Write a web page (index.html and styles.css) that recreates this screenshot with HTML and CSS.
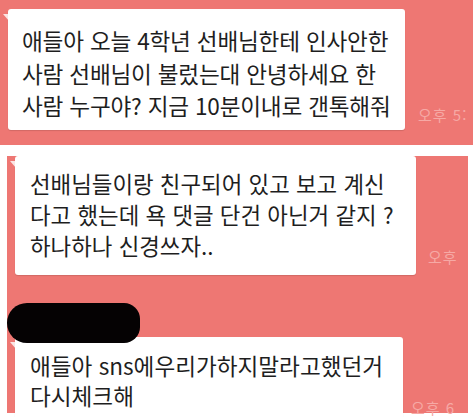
FILE: index.html
```html
<!DOCTYPE html>
<html lang="ko">
<head>
    <meta charset="UTF-8">
    <meta name="viewport" content="width=device-width, initial-scale=1.0">
    <title>카톡 캡처</title>
    <link rel="stylesheet" href="styles.css">
</head>
<body>
    <!-- 첫번째 캡처 -->
    <div class="shot shot-top">
        <div class="row">
            <div class="bubble bubble-one">
                애들아 오늘 4학년 선배님한테 인사안한<br>
                사람 선배님이 불렀는대 안녕하세요 한<br>
                사람 누구야? 지금 10분이내로 갠톡해줘
            </div>
            <span class="time time-one">오후 5:</span>
        </div>
    </div>

    <!-- 두번째 캡처 -->
    <div class="shot shot-bottom">
        <div class="row">
            <div class="bubble bubble-two">
                선배님들이랑 친구되어 있고 보고 계신<br>
                다고 했는데 욕 댓글 단건 아닌거 같지 ?<br>
                하나하나 신경쓰자..
            </div>
            <span class="time time-two">오후</span>
        </div>

        <div class="sender">
            <span class="name-mark"></span>
        </div>

        <div class="row last-row">
            <div class="bubble bubble-three">
                애들아 sns에우리가하지말라고했던거<br>
                다시체크해
            </div>
            <span class="time time-three">오후 6</span>
        </div>
    </div>
</body>
</html>
```

FILE: styles.css
```css
html, body {
    margin: 0;
    padding: 0;
}
body {
    width: 473px;
    height: 417px;
    overflow: hidden;
    background: #fff;
    font-family: "Noto Sans CJK KR", "Noto Sans", sans-serif;
    color: #1e1e1e;
}
.shot {
    background-color: #ee7773;
    overflow: hidden;
}
.shot-top {
    height: 145px;
    padding: 9px 0 0 8px;
    box-sizing: border-box;
}
.shot-bottom {
    position: relative;
    height: 257px;
    width: 461px;
    margin: 11px 0 0 7px;
    padding-left: 8px;
    box-sizing: border-box;
    overflow: visible;
}
.row {
    display: flex;
    align-items: flex-end;
}
.bubble {
    position: relative;
    background: #fff;
    border-radius: 3px;
    box-shadow: 0 1px 1px rgba(0, 0, 0, 0.12);
    box-sizing: border-box;
    white-space: nowrap;
}
.bubble::before {
    content: "";
    position: absolute;
    left: -5px;
    top: 5px;
    border-top: 7px solid #fff;
    border-left: 6px solid transparent;
    opacity: 0.8;
}
.bubble-one {
    width: 397px;
    height: 121px;
    padding: 16px 0 0 14px;
    font-size: 22.6px;
    line-height: 32.5px;
    letter-spacing: -0.2px;
}
.bubble-two {
    width: 401px;
    height: 119px;
    padding: 12px 0 0 15px;
    font-size: 22.4px;
    line-height: 31px;
}
.bubble-three {
    width: 388px;
    height: 90px;
    padding: 14px 0 0 15px;
    font-size: 22.6px;
    line-height: 30px;
}
.time {
    color: #f6a9a5;
    font-size: 15px;
    white-space: nowrap;
    letter-spacing: 1px;
}
.time-one {
    margin: 0 0 5px 13px;
}
.time-two {
    margin: 0 0 8px 12px;
}
.last-row {
    height: 76px;
    align-items: flex-start;
}
.time-three {
    padding-top: 60px;
    margin-left: 8px;
}
.sender {
    height: 62px;
}
.name-mark {
    position: absolute;
    left: 0;
    top: 147px;
    width: 133px;
    height: 40px;
    background: #050203;
    border-radius: 20px 16px 16px 20px;
    z-index: 2;
}
```
